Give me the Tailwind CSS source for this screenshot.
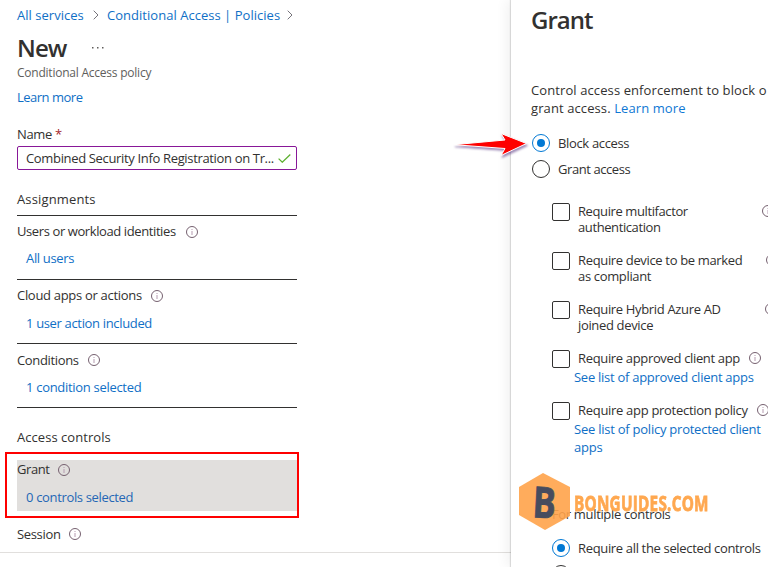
<!DOCTYPE html>
<html lang="en">
<head>
    <meta charset="UTF-8">
    <meta name="viewport" content="width=device-width, initial-scale=1.0">
    <title>New - Conditional Access policy</title>
    <script src="https://cdn.jsdelivr.net/npm/@tailwindcss/browser@4"></script>
</head>
<body class="relative flex h-[567px] w-[768px] overflow-hidden bg-white font-['Open_Sans','Noto_Sans',sans-serif] text-[13px] leading-[18px] tracking-[-0.34px] whitespace-nowrap text-[#323130]">
    <!-- Icons shared by both panes -->
    <svg class="hidden">
        <symbol id="info" viewBox="0 0 12 12">
            <circle cx="6" cy="6" r="5.5" fill="none" stroke="#75606f" stroke-width="1" />
            <path d="M6 5v4M6 3v1" stroke="#b59bb0" stroke-width="1" />
        </symbol>
        <symbol id="chevron" viewBox="0 0 6 10">
            <path d="M.7.7 5 5 .7 9.3" fill="none" stroke="#75737a" stroke-width="1" />
        </symbol>
    </svg>

    <!-- Policy form -->
    <main class="h-[553px] w-[511px] shrink-0 border-b border-[#e1dfdd] pl-[17px]">
        <nav class="flex h-[30px] items-center tracking-[0.03px] text-[#0f6fc6]">
            <a class="w-[76px]">All services</a>
            <svg class="h-[10px] w-[6px]"><use href="#chevron" /></svg>
            <a class="ml-[8px] w-[180px]">Conditional Access | Policies</a>
            <svg class="h-[10px] w-[6px]"><use href="#chevron" /></svg>
        </nav>
        <div class="flex h-9 items-center">
            <h1 class="w-[75px] text-2xl font-semibold tracking-[-0.9px]">New</h1>
            <svg class="h-[2px] w-3" viewBox="0 0 12 2" fill="#605e5c"><path d="M0 0h1.5v1.5H0zM5 0h1.5v1.5H5zM10 0h1.5v1.5H10z" /></svg>
        </div>
        <p class="text-xs leading-[14px] tracking-[-0.23px] text-[#605e5c]">Conditional Access policy</p>
        <a class="mt-2 block tracking-[-0.5px] text-[#0f6fc6]">Learn more</a>

        <div class="w-[280px]">
            <label class="mt-[19px] block tracking-[-0.34px]">Name <span class="text-[#a4262c]">*</span></label>
            <div class="mt-[3px] flex h-6 items-center justify-between rounded-xs border border-[#881798] pr-[5px] pl-2">
                <span>Combined Security Info Registration on Tr...</span>
                <svg class="h-[9px] w-[13px] shrink-0" viewBox="0 0 13 9" fill="none" stroke="#5db030" stroke-width="1.3"><path d="M.6 4.6 4.3 8.2 12.3.5" /></svg>
            </div>

            <h2 class="mt-5 border-b border-[#323130] pb-[7px] tracking-[0.15px]">Assignments</h2>
            <section class="h-16 border-b border-[#323130]">
                <div class="flex h-[31px] items-center gap-2.5"><span class="-mt-px tracking-[-0.4px]">Users or workload identities</span> <svg class="size-3"><use href="#info" /></svg></div>
                <a class="ml-[9px] block pt-0.5 text-[#0f6fc6]">All users</a>
            </section>
            <section class="h-16 border-b border-[#323130]">
                <div class="flex h-[31px] items-center gap-[9px]"><span class="-mt-px tracking-[-0.3px]">Cloud apps or actions</span> <svg class="size-3"><use href="#info" /></svg></div>
                <a class="ml-[9px] block pt-[3px] text-[#0f6fc6]">1 user action included</a>
            </section>
            <section class="h-16 border-b border-[#323130]">
                <div class="flex h-[31px] items-center gap-[9px]">Conditions <svg class="size-3"><use href="#info" /></svg></div>
                <a class="ml-[9px] block pt-[3px] tracking-[-0.3px] text-[#0f6fc6]">1 condition selected</a>
            </section>

            <h2 class="mt-5 tracking-[0.05px]">Access controls</h2>
            <section class="mt-3.5 h-[51px] bg-[#e1dfdd]">
                <div class="flex h-[19px] items-center gap-2"><span class="-mt-0.5 tracking-[-0.4px]">Grant</span> <svg class="size-3"><use href="#info" /></svg></div>
                <a class="ml-[9px] block pt-[9px] text-[#2467b5]">0 controls selected</a>
            </section>
            <div class="mt-3.5 flex items-center gap-2">Session <svg class="size-3"><use href="#info" /></svg></div>
        </div>
    </main>

    <!-- Grant pane -->
    <aside class="h-[567px] w-[257px] shrink-0 pl-5 shadow-[-1px_0_1px_rgba(0,0,0,0.12),-4px_0_12px_rgba(0,0,0,0.06)]">
        <h1 class="h-[41px] text-2xl leading-[40px] font-semibold tracking-[-1px]">Grant</h1>
        <p class="mt-10 tracking-[0.1px]">Control access enforcement to block o<br>grant access. <a class="text-[#0f78d4]">Learn more</a></p>
        <div class="mt-[13px] ml-px flex h-[26px] items-center gap-2">
            <span class="flex size-[18px] items-center justify-center rounded-full border border-[#0078d4]"><span class="size-2 rounded-full bg-[#0078d4]"></span></span>
            Block access
        </div>
        <div class="ml-px flex h-[26px] items-center gap-2 tracking-[-0.42px]">
            <span class="size-[18px] rounded-full border border-[#323130]"></span>
            Grant access
        </div>

        <div class="mt-[21px] ml-[21px] leading-4">
            <div class="flex h-[49px] gap-2">
                <span class="size-[18px] shrink-0 rounded-xs border border-[#323130]"></span>
                <span class="w-[176px] shrink-0 tracking-[-0.4px]">Require multifactor<br>authentication</span>
                <svg class="mt-0.5 size-3 shrink-0"><use href="#info" /></svg>
            </div>
            <div class="flex h-[49px] gap-2">
                <span class="size-[18px] shrink-0 rounded-xs border border-[#323130]"></span>
                <span class="w-[180px] shrink-0">Require device to be marked<br>as compliant</span>
                <svg class="mt-0.5 size-3 shrink-0"><use href="#info" /></svg>
            </div>
            <div class="flex h-[49px] gap-2">
                <span class="size-[18px] shrink-0 rounded-xs border border-[#323130]"></span>
                <span class="w-[179px] shrink-0">Require Hybrid Azure AD<br>joined device</span>
                <svg class="mt-0.5 size-3 shrink-0"><use href="#info" /></svg>
            </div>
            <div class="h-[52px]">
                <div class="flex h-[18px] gap-2">
                    <span class="size-[18px] shrink-0 rounded-xs border border-[#323130]"></span>
                    <span class="w-[163px] shrink-0">Require approved client app</span>
                    <svg class="mt-0.5 size-3 shrink-0"><use href="#info" /></svg>
                </div>
                <a class="ml-[22px] block leading-[18px] tracking-[-0.27px] text-[#0f6fc6]">See list of approved client apps</a>
            </div>
            <div class="h-[103px]">
                <div class="flex h-[18px] gap-2">
                    <span class="size-[18px] shrink-0 rounded-xs border border-[#323130]"></span>
                    <span class="w-[171px] shrink-0 tracking-[-0.3px]">Require app protection policy</span>
                    <svg class="mt-0.5 size-3 shrink-0"><use href="#info" /></svg>
                </div>
                <a class="ml-[22px] block leading-[18px] tracking-[-0.24px] text-[#0f6fc6]">See list of policy protected client<br>apps</a>
            </div>

            <p class="leading-[18px]">For multiple controls</p>
            <div class="mt-4 flex h-[18px] items-center gap-2">
                <span class="flex size-[18px] shrink-0 items-center justify-center rounded-full border border-[#0078d4]"><span class="size-2 rounded-full bg-[#0078d4]"></span></span>
                Require all the selected controls
            </div>
            <span class="mt-2 block size-[18px] rounded-full border border-[#323130]"></span>
        </div>
    </aside>

    <!-- Annotations over the page -->
    <div class="absolute top-[452px] left-[5px] h-[66px] w-[294px] border-2 border-[#fe0000]"></div>
    <svg class="absolute top-[128px] left-[450px] h-8 w-20 drop-shadow-[1px_2px_1px_rgba(60,20,110,0.5)]" viewBox="0 0 80 32">
        <path d="M4 16.7 55 12 51 5.5 76.5 15.5 51 27.5 55 20.5z" fill="#fe0000" stroke="#fff" stroke-width="1" />
    </svg>

    <!-- Watermark -->
    <div class="absolute top-[473px] left-[519px] flex items-center">
        <div class="relative flex h-[57px] w-[51px] items-center justify-center">
            <svg class="absolute inset-0 h-[57px] w-[51px]" viewBox="0 0 51 57"><path d="M24 0 51 14V43L26 57 0 42V14z" fill="#ffa34a" fill-opacity=".9" /></svg>
            <span class="relative scale-x-[.8] rotate-3 font-['Open_Sans',sans-serif] text-[43px] leading-none font-bold tracking-normal text-[#474c5e] [-webkit-text-stroke:0.8px_#474c5e]">B</span>
        </div>
        <span class="ml-1 origin-left scale-x-[.695] font-['Open_Sans',sans-serif] text-[22px] leading-none font-bold tracking-[0.35px] text-[#ffa850] [-webkit-text-stroke:0.8px_#ffa850]">BONGUIDES.COM</span>
    </div>
</body>
</html>
